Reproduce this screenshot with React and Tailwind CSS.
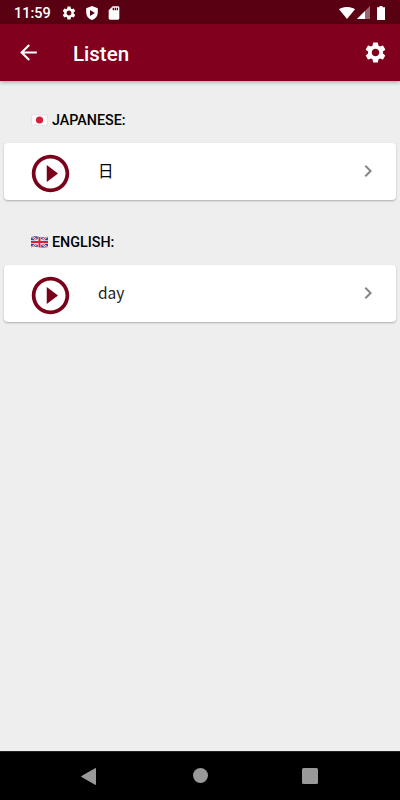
import { MdSettings, MdArrowBack, MdSdCard, MdPlayCircleOutline, MdChevronRight } from 'react-icons/md';

function ShieldPlay() {
  return (
    <svg className="ml-[9px] h-[14px] w-3" viewBox="0 0 12 14" fill="white">
      <path fillRule="evenodd" d="M6 0 11.8 2.2V6.5C11.8 10 9.3 13 6 14 2.7 13 .2 10 .2 6.5V2.2ZM4 3.9v6L8.9 6.9Z" />
    </svg>
  );
}

function StatusBar() {
  return (
    <div className="flex h-6 items-center bg-[#5a0013] pt-px pl-[14px] text-white">
      <span className="w-[47px] pt-[2px] text-[14.5px] leading-6 font-medium">11:59</span>
      <MdSettings className="size-4" />
      <ShieldPlay />
      <MdSdCard className="ml-[8px] size-4" />
      <div className="ml-auto flex items-center pr-[15px]">
        <svg className="h-3 w-4" viewBox="0 0 16 12" fill="white">
          <path d="M0 2.3C4.5-.8 11.5-.8 16 2.3L8 12Z" />
        </svg>
        <svg className="ml-[2px] h-[13px] w-[13px]" viewBox="0 0 13 13" fill="white">
          <path d="M13 0V13H0Z" fillOpacity=".4" />
          <path d="M8 5V13H0Z" />
        </svg>
        <svg className="ml-[7px] h-[14px] w-2" viewBox="0 0 8 14" fill="white">
          <path d="M2.4 0h3.2v1.2H8V14H0V1.2h2.4Z" />
        </svg>
      </div>
    </div>
  );
}

function JapanFlag() {
  return (
    <svg className="h-3 w-[17px]" viewBox="0 0 17 12">
      <path d="M.5 1C4-.2 6 .6 8.5 1s5 .5 8-.3v10.4c-3 .8-5.5.5-8 .1s-4.5-.8-8 0Z" fill="#fafafa" stroke="#d4d4d4" strokeWidth=".5" />
      <circle cx="8.5" cy="6" r="3.6" fill="#d3203e" />
    </svg>
  );
}

function UnitedKingdomFlag() {
  return (
    <svg className="h-3 w-[17px]" viewBox="0 0 17 12">
      <defs>
        <clipPath id="uk">
          <path d="M0 1C4-.2 6 .6 8.5 1s5 .5 8.5-.3v10.4c-3.5.8-6 .5-8.5.1s-4.5-.8-8.5 0Z" />
        </clipPath>
      </defs>
      <g clipPath="url(#uk)">
        <path d="M0 0H17V12H0Z" fill="#29489b" />
        <path d="M0 0 17 12M17 0 0 12" stroke="#f2f2f5" strokeWidth="2.2" />
        <path d="M0 0 17 12M17 0 0 12" stroke="#d3304c" strokeWidth=".9" />
        <path d="M8.5 0V12M0 6H17" stroke="#f5f5f5" strokeWidth="3.4" />
        <path d="M8.5 0V12M0 6H17" stroke="#d3203e" strokeWidth="2" />
      </g>
    </svg>
  );
}

function Section({ flag, title, children }) {
  return (
    <section className="h-[122px] px-1">
      <h2 className="flex h-[62px] items-center gap-1 pt-[15px] pl-[27px] text-[14.3px] font-medium text-black">
        {flag}
        <span className="pt-[2px]">{title}</span>
      </h2>
      <div className="flex h-[57px] items-center rounded-[4px] bg-white pt-[3px] pr-4 pl-6 shadow-[0_1px_2px_rgba(0,0,0,0.28)]">
        <MdPlayCircleOutline className="size-[45px] text-[#7b0019]" />
        {children}
        <MdChevronRight className="-mt-[4px] ml-auto size-6 text-[#858585]" />
      </div>
    </section>
  );
}

export default function App() {
  return (
    <div className="flex h-[800px] w-[400px] flex-col bg-[#eee] font-[Roboto,'Noto_Sans_CJK_JP',sans-serif]">
      <StatusBar />
      <header className="flex h-[57px] shrink-0 items-center bg-[#80001e] pr-3 pl-4 text-white shadow-[0_1px_4px_rgba(0,0,0,0.35)]">
        <MdArrowBack className="size-[25px]" />
        <h1 className="ml-[32px] pt-[3px] text-[20.5px] font-medium">Listen</h1>
        <MdSettings className="ml-auto size-[25px]" />
      </header>
      <main className="flex-1">
        <Section flag={<JapanFlag />} title="JAPANESE:">
          <span className="ml-[25px] text-[15.5px] text-black">日</span>
        </Section>
        <Section flag={<UnitedKingdomFlag />} title="ENGLISH:">
          <span className="-mt-[4px] ml-[25px] font-['Noto_Sans_CJK_JP',sans-serif] text-[15.5px] text-[#222]">day</span>
        </Section>
      </main>
      <nav className="flex h-[49px] items-center border-t border-[#222] bg-black pl-[81px]">
        <svg className="h-[17px] w-[15px]" viewBox="0 0 15 17" fill="#999">
          <path d="M14.5.5V16.5L.5 8.5Z" stroke="#999" strokeLinejoin="round" />
        </svg>
        <span className="-mt-px ml-[96.5px] size-[15px] rounded-full bg-[#999]" />
        <span className="ml-[94.5px] size-4 rounded-[1.5px] bg-[#999]" />
      </nav>
    </div>
  );
}
